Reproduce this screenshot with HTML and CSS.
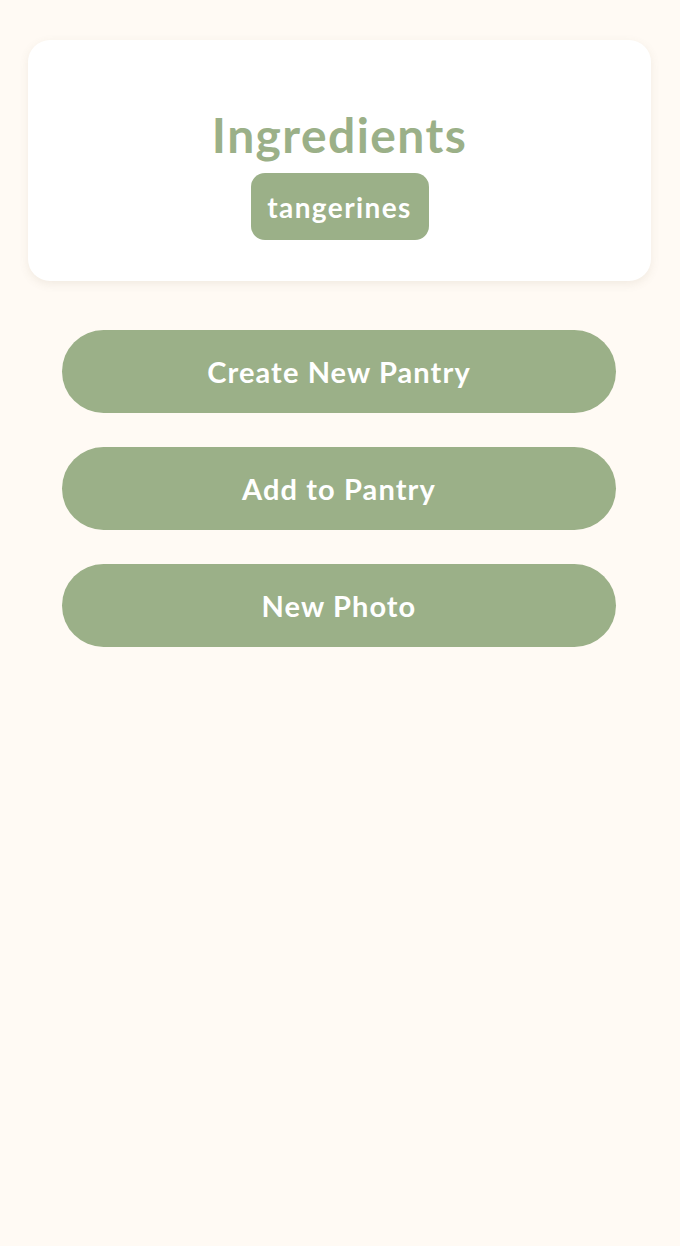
FILE: index.html
```html
<!DOCTYPE html>
<html lang="en">
<head>
  <meta charset="UTF-8" />
  <meta name="viewport" content="width=device-width, initial-scale=1.0" />
  <title>Pantry - Ingredients</title>
  <link rel="stylesheet" href="styles.css">
</head>
<body>

  <div class="page">
    <div class="ingredients-card">
      <h1>Ingredients</h1>
      <ul class="chips">
        <li class="chip">tangerines</li>
      </ul>
    </div>

    <div class="actions">
      <button class="action-btn">Create New Pantry</button>
      <button class="action-btn">Add to Pantry</button>
      <button class="action-btn">New Photo</button>
    </div>
  </div>

</body>
</html>
```

FILE: styles.css
```css
body { margin: 0; background: #fffaf4; font-family: "Lato", "Noto Sans", sans-serif; }
.page { padding: 40px 29px 40px 28px; }
.ingredients-card { background: #fff; border-radius: 22px; height: 241px; box-sizing: border-box; padding-top: 65px; display: flex; flex-direction: column; align-items: center; box-shadow: 0 3px 10px rgba(120,100,70,0.10); }
.ingredients-card h1 { margin: 0; color: #9bb088; font-size: 48px; font-weight: 700; line-height: 60px; letter-spacing: 1.4px; }
.chips { list-style: none; margin: 8px 0 0; padding: 0; display: flex; gap: 10px; }
.chip { background: #9bb088; color: #fff; font-size: 28px; font-weight: 700; letter-spacing: 1.4px; border-radius: 14px; height: 67px; width: 178px; box-sizing: border-box; display: flex; align-items: center; justify-content: center; }
.actions { margin: 49px 35px 0 34px; display: flex; flex-direction: column; gap: 34px; }
.action-btn { border: none; background: #9bb088; color: #fff; font-family: inherit; font-size: 29px; font-weight: 700; letter-spacing: 1.1px; height: 83px; border-radius: 42px; cursor: pointer; }
```
